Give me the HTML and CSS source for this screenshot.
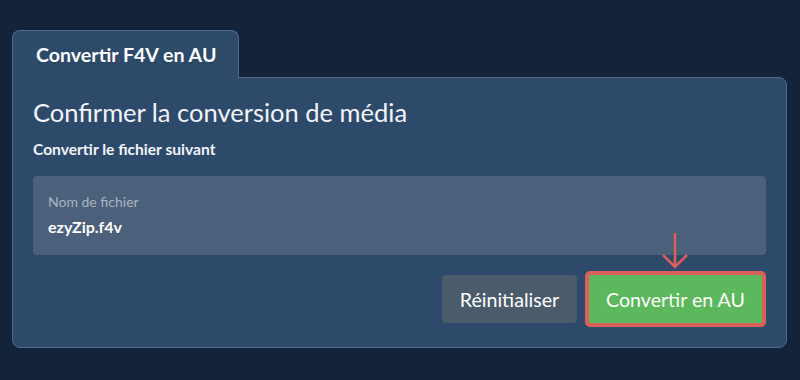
FILE: index.html
```html
<!DOCTYPE html>
<html lang="fr">

<head>
    <meta charset="UTF-8">
    <meta name="viewport" content="width=device-width, initial-scale=1.0">
    <title>Convertir F4V en AU</title>
    <link rel="stylesheet" href="styles.css">
</head>

<body>
    <div class="wrapper">
        <div class="tab">Convertir F4V en AU</div>
        <div class="panel">
            <h2>Confirmer la conversion de média</h2>
            <p class="subtitle">Convertir le fichier suivant</p>
            <div class="field">
                <div class="field-label">Nom de fichier</div>
                <div class="field-value">ezyZip.f4v</div>
            </div>
            <div class="actions">
                <button class="button reset">Réinitialiser</button>
                <div class="convert-wrap">
                    <svg class="arrow" width="30" height="38" viewBox="0 0 30 38">
                        <path d="M15 1 V35 M3 23 L15 35 L27 23" fill="none" stroke="#dc605a" stroke-width="2.5" />
                    </svg>
                    <button class="button convert">Convertir en AU</button>
                </div>
            </div>
        </div>
    </div>
</body>

</html>
```

FILE: styles.css
```css
/* Global styles */
body {
    margin: 0;
    background-color: #12233a;
    font-family: Lato, "Open Sans", sans-serif;
    color: #fff;
}

.wrapper {
    padding: 30px 13px 0 12px;
}

.tab {
    display: inline-block;
    box-sizing: border-box;
    width: 227px;
    height: 48px;
    padding: 12px 0 0 23px;
    background-color: #2d4a6b;
    border: 1px solid #52698a;
    border-bottom: none;
    border-radius: 8px 8px 0 0;
    font-size: 19.6px;
    font-weight: bold;
    position: relative;
    z-index: 1;
    margin-bottom: -1px;
}

.panel {
    background-color: #2d4a6b;
    border: 1px solid #52698a;
    border-radius: 0 8px 8px 8px;
    padding: 19px 20px 20px 20px;
}

.panel h2 {
    margin: 0;
    font-size: 25.5px;
    font-weight: normal;
    color: #f2f4f7;
}

.subtitle {
    margin: 13px 0 0;
    font-size: 15.6px;
    font-weight: bold;
    color: #f2f4f7;
}

/* Field */
.field {
    margin-top: 18px;
    padding: 17px 15px 19px;
    background-color: #4b607a;
    border-radius: 4px;
}

.field-label {
    font-size: 14px;
    color: #a9b4c2;
}

.field-value {
    margin-top: 7px;
    font-size: 16px;
    font-weight: bold;
}

/* Buttons */
.actions {
    display: flex;
    justify-content: flex-end;
    align-items: center;
    gap: 8px;
    margin-top: 16px;
}

.button {
    font-family: Lato, "Open Sans", sans-serif;
    font-size: 19.6px;
    color: #fff;
    border: none;
    border-radius: 4px;
    cursor: pointer;
}

.reset {
    width: 135px;
    height: 48px;
    background-color: #4b5b6c;
}

.convert-wrap {
    position: relative;
}

.arrow {
    position: absolute;
    left: 75px;
    top: -39px;
}

.convert {
    display: block;
    width: 181px;
    height: 56px;
    background-color: #5cb85c;
    border: 4px solid #dc605a;
    border-radius: 5px;
}
```
